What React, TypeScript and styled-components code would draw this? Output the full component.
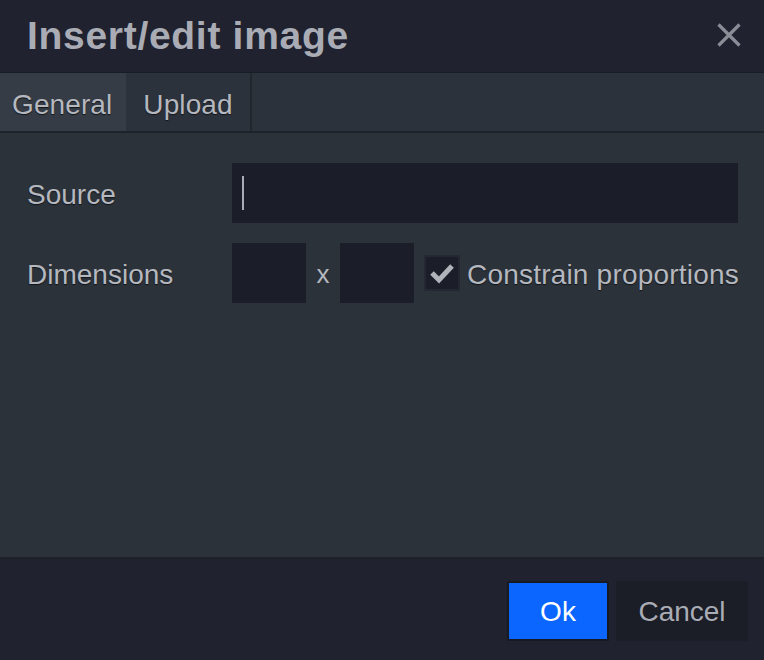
import React from "react";
import styled, { createGlobalStyle } from "styled-components";

const Global = createGlobalStyle`
  html, body { margin: 0; padding: 0; background: #20222f; }
  body { font-family: "Liberation Sans", Arial, sans-serif; }
  * { box-sizing: border-box; }
`;

const Dialog = styled.div`
  width: 764px;
  height: 660px;
  display: flex;
  flex-direction: column;
  background: #20222f;
`;

const Header = styled.div`
  height: 73px;
  display: flex;
  align-items: center;
  justify-content: space-between;
  padding: 0 20px 0 27px;
  border-bottom: 1px solid #1a1c25;
`;

const Title = styled.h1`
  margin: 0;
  font-size: 39px;
  font-weight: 700;
  color: #a9acb4;
  padding-bottom: 1px;
  letter-spacing: 0.7px;
`;

const Close = styled.button`
  width: 30px;
  height: 30px;
  padding: 0;
  border: 0;
  background: transparent;
  display: flex;
  align-items: center;
  justify-content: center;
  margin-bottom: 2px;
`;

const TabBar = styled.div`
  height: 60px;
  display: flex;
  background: #2c323b;
  border-bottom: 2px solid #1e2229;
`;

const Tab = styled.div<{ $active?: boolean }>`
  height: 100%;
  display: flex;
  align-items: center;
  padding: 6px ${(p) => (p.$active ? "14px" : "17px")} 0 ${(p) => (p.$active ? "12px" : "17px")};
  font-size: 28px;
  letter-spacing: 0.1px;
  color: #b5b8bf;
  text-shadow: 0 1px 1px #12141a;
  background: ${(p) => (p.$active ? "#353c45" : "transparent")};
  border-right: ${(p) => (p.$active ? "none" : "2px solid #22272e")};
`;

const Body = styled.div`
  flex: 1;
  background: #2c323a;
  padding: 30px 26px 0 27px;
  display: flex;
  flex-direction: column;
  gap: 20px;
  border-bottom: 2px solid #1e2129;
`;

const Row = styled.div`
  display: flex;
  align-items: center;
  height: 60px;
`;

const Label = styled.div`
  flex: none;
  width: 205px;
  font-size: 28px;
  color: #b5b8bf;
  text-shadow: 0 1px 1px #12141a;
  padding-top: 3px;
`;

const Input = styled.div<{ $w?: number }>`
  height: 60px;
  width: ${(p) => (p.$w ? `${p.$w}px` : "auto")};
  flex: ${(p) => (p.$w ? "none" : "1")};
  background: #1b1d28;
  display: flex;
  align-items: center;
  padding-left: 10px;
`;

const Caret = styled.div`
  width: 2px;
  height: 34px;
  background: #a9acb4;
`;

const Times = styled.span`
  flex: none;
  width: 34px;
  text-align: center;
  font-size: 26px;
  color: #b5b8bf;
  padding-top: 3px;
`;

const Check = styled.div`
  flex: none;
  margin-left: 10px;
  width: 36px;
  height: 36px;
  background: #1b1d28;
  border: 2px solid #232833;
  display: flex;
  align-items: center;
  justify-content: center;
`;

const CheckLabel = styled.span`
  flex: none;
  margin-left: 7px;
  font-size: 28px;
  letter-spacing: 0.2px;
  color: #b5b8bf;
  text-shadow: 0 1px 1px #12141a;
  white-space: nowrap;
  padding-top: 3px;
`;

const Footer = styled.div`
  height: 101px;
  display: flex;
  justify-content: flex-end;
  align-items: flex-start;
  padding: 22px 16px 0 0;
  gap: 7px;
`;

const Button = styled.button<{ $primary?: boolean }>`
  height: 60px;
  padding: 2px 0 0;
  width: ${(p) => (p.$primary ? "102px" : "132px")};
  border: ${(p) => (p.$primary ? "2px solid #181a22" : "none")};
  background: ${(p) => (p.$primary ? "#0a66ff" : "#1b1d27")};
  color: ${(p) => (p.$primary ? "#ffffff" : "#a9acb4")};
  font-family: "Liberation Sans", Arial, sans-serif;
  font-size: 28px;
`;

export default function App() {
  return (
    <>
      <Global />
      <Dialog>
        <Header>
          <Title>Insert/edit image</Title>
          <Close aria-label="Close">
            <svg width="24" height="24" viewBox="0 0 24 24">
              <path d="M1.5 1.5 L22.5 22.5 M22.5 1.5 L1.5 22.5" stroke="#8a8d96" strokeWidth="3.2" />
            </svg>
          </Close>
        </Header>
        <TabBar>
          <Tab $active>General</Tab>
          <Tab>Upload</Tab>
        </TabBar>
        <Body>
          <Row>
            <Label>Source</Label>
            <Input>
              <Caret />
            </Input>
          </Row>
          <Row>
            <Label>Dimensions</Label>
            <Input $w={74} />
            <Times>x</Times>
            <Input $w={74} />
            <Check>
              <svg width="26" height="22" viewBox="0 0 26 22">
                <path d="M3 11 L10 18 L23 4" fill="none" stroke="#b0b3ba" strokeWidth="5" />
              </svg>
            </Check>
            <CheckLabel>Constrain proportions</CheckLabel>
          </Row>
        </Body>
        <Footer>
          <Button $primary>Ok</Button>
          <Button>Cancel</Button>
        </Footer>
      </Dialog>
    </>
  );
}
